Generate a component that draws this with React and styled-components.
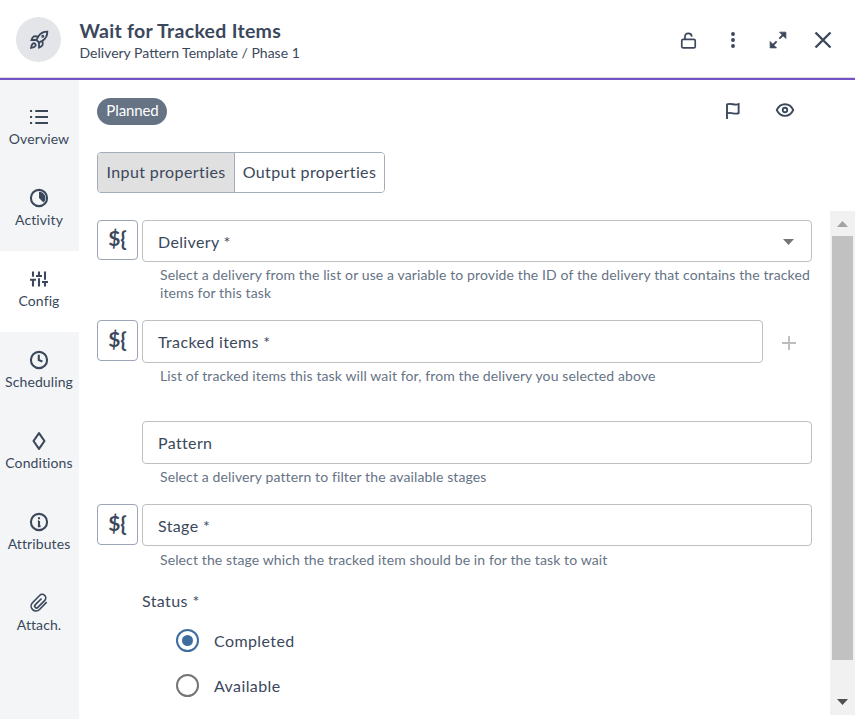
import React from "react";
import styled, { createGlobalStyle } from "styled-components";

const ink = "#3b485c";
const muted = "#667385";

const GlobalStyle = createGlobalStyle`
  * { box-sizing: border-box; }
  body { margin: 0; background: #fff; overflow: hidden; }
`;

const Page = styled.div`
  display: flex;
  flex-direction: column;
  height: 719px;
  font-family: Lato, sans-serif;
  color: ${ink};
`;

const Header = styled.header`
  display: flex;
  height: 80px;
  flex: none;
  padding: 17px 20px 0 16px;
  border-bottom: 2px solid #7553c4;
  box-shadow: inset 0 -1px 0 #d9dce3;
`;

const Avatar = styled.div`
  display: grid;
  place-items: center;
  width: 45px;
  height: 45px;
  border-radius: 50%;
  background: #e3e5e8;
`;

const Heading = styled.div`
  margin: 2px 0 0 18.5px;
  flex: 1;
`;

const Title = styled.h1`
  margin: 0;
  font-size: 19.5px;
  line-height: 24px;
  font-weight: 700;
  letter-spacing: 0.28px;
`;

const Subtitle = styled.div`
  font-size: 14px;
  line-height: 20px;
`;

const HeaderActions = styled.div`
  display: flex;
  gap: 21px;
  margin-top: 11px;
  height: 24px;
`;

const IconButton = styled.button`
  display: grid;
  place-items: center;
  width: 24px;
  height: 24px;
  padding: 0;
  border: 0;
  background: none;
  color: ${(p) => p.$color || ink};
`;

const Body = styled.div`
  display: flex;
  flex: 1;
  min-height: 0;
`;

const Sidebar = styled.nav`
  width: 79px;
  flex: none;
  padding-top: 9px;
  background: #f3f5f7;
`;

const NavItem = styled.a`
  display: flex;
  flex-direction: column;
  align-items: center;
  height: 81px;
  padding: 19px 1px 0 0;
  background: ${(p) => (p.$active ? "#fff" : "transparent")};
`;

const NavLabel = styled.span`
  margin-top: 3px;
  font-size: 14px;
  line-height: 20px;
  letter-spacing: 0.1px;
  white-space: nowrap;
`;

const Main = styled.main`
  display: flex;
  flex-direction: column;
  flex: 1;
  min-width: 0;
  padding-left: 18px;
`;

const StatusBar = styled.div`
  display: flex;
  align-items: flex-start;
  height: 72px;
  padding: 18px 58px 0 0;
`;

const Badge = styled.span`
  width: 70px;
  height: 27px;
  padding-left: 1px;
  margin-right: auto;
  border-radius: 14px;
  background: #667385;
  color: #fff;
  font-size: 15px;
  line-height: 25px;
  letter-spacing: -0.1px;
  text-align: center;
`;

const StatusActions = styled.div`
  display: flex;
  gap: 28.5px;
`;

const Toggle = styled.div`
  display: flex;
  width: 288px;
  height: 41px;
  border: 1px solid #a3acba;
  border-radius: 4px;
  overflow: hidden;
`;

const ToggleOption = styled.button`
  width: ${(p) => p.$width}px;
  padding: 0 0 2px;
  border: 0;
  border-right: ${(p) => (p.$active ? "1px solid #a3acba" : "0")};
  background: ${(p) => (p.$active ? "#e0e0e0" : "#fff")};
  color: ${ink};
  font: 16px/37px Lato, sans-serif;
  letter-spacing: 0.4px;
  white-space: nowrap;
`;

const ScrollArea = styled.div`
  display: flex;
  height: 504px;
  margin-top: 18px;
`;

const Form = styled.form`
  flex: 1;
  min-width: 0;
  padding: 9px 18px 0 0;
`;

const FieldRow = styled.div`
  display: grid;
  grid-template-columns: 41px minmax(0, 1fr);
  column-gap: 4px;
  align-items: start;
  height: ${(p) => p.$height}px;
`;

const VariableButton = styled.button`
  width: 41px;
  height: ${(p) => p.$height || 41}px;
  padding: 0 0 5px;
  border: 1px solid #9ba5b5;
  border-radius: 4px;
  background: #fff;
  color: ${ink};
  font: 700 21px/33px Lato, sans-serif;
`;

const Field = styled.div`
  grid-column: 2;
`;

const InputLine = styled.div`
  display: flex;
  align-items: center;
`;

const InputBox = styled.div`
  display: flex;
  align-items: center;
  flex: 1;
  height: ${(p) => p.$height || 43}px;
  padding: ${(p) => (p.$height ? 2 : 1)}px 17px 0 15px;
  border: 1px solid #bfbfbf;
  border-radius: 4px;
`;

const InputLabel = styled.span`
  flex: 1;
  font-size: 16px;
  line-height: 22px;
  letter-spacing: 0.36px;
`;

const AddButton = styled(IconButton)`
  margin: 3px 11px 0 14px;
`;

const Hint = styled.div`
  margin-top: ${(p) => p.$gap || 4}px;
  padding-left: 18px;
  color: ${muted};
  font-size: 14px;
  line-height: 18px;
  letter-spacing: 0.12px;
  white-space: nowrap;
`;

const RadioGroup = styled.div`
  padding-left: 45px;
`;

const RadioTitle = styled.div`
  height: 29px;
  font-size: 16px;
  line-height: 24px;
  letter-spacing: 0.4px;
`;

const RadioOption = styled.label`
  display: flex;
  align-items: center;
  height: 45px;
  padding-left: 34px;
  font-size: 16px;
  letter-spacing: 0.4px;
`;

const RadioMark = styled.span`
  display: grid;
  place-items: center;
  width: 23px;
  height: 23px;
  margin-right: 15px;
  border: 2px solid ${(p) => (p.$checked ? "#3d6c9e" : "#757575")};
  border-radius: 50%;
  &::after {
    content: "";
    width: 11px;
    height: 11px;
    border-radius: 50%;
    background: ${(p) => (p.$checked ? "#3d6c9e" : "transparent")};
  }
`;

const RadioText = styled.span`
  line-height: 20px;
`;

const Scrollbar = styled.div`
  display: flex;
  flex-direction: column;
  justify-content: space-between;
  align-items: center;
  width: 25px;
  background: #f1f1f1;
`;

const ScrollThumb = styled.div`
  width: 21px;
  height: 424px;
  margin-bottom: 30px;
  background: #c1c1c1;
`;

const ScrollArrow = styled.div`
  display: grid;
  place-items: center;
  width: 25px;
  height: 25px;
  padding-bottom: ${(p) => p.$lift || 0}px;
  color: ${(p) => p.$color};
`;

const icons = {
  rocket: (
    <>
      <path d="M4.5 16.5c-1.5 1.26-2 5-2 5s3.74-.5 5-2c.71-.84.7-2.13-.09-2.91a2.18 2.18 0 0 0-2.91-.09z" />
      <path d="m12 15-3-3a22 22 0 0 1 2-3.95A12.88 12.88 0 0 1 22 2c0 2.72-.78 7.5-6 11a22.35 22.35 0 0 1-4 2z" />
      <path d="M9 12H3s1-3.6 3-4.3c1.62-.6 5 .3 5 .3M12 15v6s3.6-1 4.3-3c.6-1.62-.3-5-.3-5" />
      <circle cx="16.5" cy="7.5" r=".7" />
    </>
  ),
  lock: (
    <>
      <rect x="2.5" y="10.5" width="19" height="12" rx="2" />
      <path d="M7 10V7C7 .2 16.2 .2 16.7 6.5" />
    </>
  ),
  more: (
    <g fill="currentColor" stroke="none">
      <circle cx="12" cy="3" r="2.9" /><circle cx="12" cy="12" r="2.9" /><circle cx="12" cy="21" r="2.9" />
    </g>
  ),
  expand: (
    <>
      <path d="M13.8 10.2L20 4M10.2 13.8L4 20" />
      <path d="M14 1.5H22.5V10L19 6.5L17.5 5ZM1.5 14V22.5H10L6.5 19L5 17.5Z" fill="currentColor" strokeWidth="1" />
    </>
  ),
  close: <path d="M3 3L21 21M21 3L3 21" />,
  flag: <path d="M4 24V4.6C9 2 14 6.5 19.5 4.3V16.2C15 18.5 9.5 14.3 4 16.5" />,
  eye: (
    <>
      <path d="M1 12C3.5 6.7 7.4 4.3 12 4.3S20.5 6.7 23 12C20.5 17.3 16.6 19.7 12 19.7S3.5 17.3 1 12Z" />
      <circle cx="12" cy="12" r="3" />
    </>
  ),
  list: (
    <>
      <path d="M7 4H24M7 12H24M7 20H24" />
      <path d="M0 4H2.8M0 12H2.8M0 20H2.8" />
    </>
  ),
  activity: (
    <>
      <circle cx="12" cy="12" r="10.8" />
      <path d="M12 3.5A8.5 8.5 0 0 1 18 18L12 12Z" fill="currentColor" stroke="none" />
    </>
  ),
  config: <path d="M4 2V9M4 14V22M12 2V8M12 11V22M20 2V13M20 17V22M0 13H8M8 8H16M16 16H24" />,
  clock: (
    <>
      <circle cx="12" cy="12" r="10.8" />
      <path d="M11.7 5V12L16.5 14" />
    </>
  ),
  diamond: <path d="M12 1.5L19.3 12L12 22.5L4.7 12Z" strokeLinejoin="round" />,
  info: (
    <>
      <circle cx="12" cy="12" r="10.8" />
      <path d="M12 10.5V18M10.5 11H12M10.5 17.5H14M12 5.8V8.4" />
    </>
  ),
  clip: <path d="M22.2 10.8l-9.5 9.9a6.4 6.4 0 0 1-9.4-9l9.5-9.7a4.7 4.7 0 0 1 6.9 6.5l-9.2 9.3a2.4 2.4 0 0 1-3.6-3.3l8.5-8.5" />,
  plus: <path d="M12 1.5V22.5M1.5 12H22.5" />,
};

function Icon({ name, size = 18, stroke = 2.5 }) {
  return (
    <svg width={size} height={size} viewBox="0 0 24 24" fill="none" stroke="currentColor" strokeWidth={stroke} overflow="visible">
      {icons[name]}
    </svg>
  );
}

const navItems = [
  ["Overview", "list"],
  ["Activity", "activity"],
  ["Config", "config"],
  ["Scheduling", "clock"],
  ["Conditions", "diamond"],
  ["Attributes", "info"],
  ["Attach.", "clip"],
];

export default function App() {
  return (
    <Page>
      <GlobalStyle />
      <Header>
        <Avatar><Icon name="rocket" size={20} stroke={2.2} /></Avatar>
        <Heading>
          <Title>Wait for Tracked Items</Title>
          <Subtitle>Delivery Pattern Template / Phase 1</Subtitle>
        </Heading>
        <HeaderActions>
          <IconButton type="button" aria-label="Unlock"><Icon name="lock" size={17} stroke={2.4} /></IconButton>
          <IconButton type="button" aria-label="More"><Icon name="more" size={16} /></IconButton>
          <IconButton type="button" aria-label="Expand"><Icon name="expand" size={18} /></IconButton>
          <IconButton type="button" aria-label="Close"><Icon name="close" size={20} stroke={2.8} /></IconButton>
        </HeaderActions>
      </Header>
      <Body>
        <Sidebar>
          {navItems.map(([label, icon]) => (
            <NavItem key={label} $active={label === "Config"}>
              <Icon name={icon} size={18} stroke={icon === "clip" ? 2.2 : 2.8} />
              <NavLabel>{label}</NavLabel>
            </NavItem>
          ))}
        </Sidebar>
        <Main>
          <StatusBar>
            <Badge>Planned</Badge>
            <StatusActions>
              <IconButton type="button" aria-label="Flag"><Icon name="flag" stroke={2.5} /></IconButton>
              <IconButton type="button" aria-label="Watch"><Icon name="eye" stroke={2.4} /></IconButton>
            </StatusActions>
          </StatusBar>
          <Toggle>
            <ToggleOption type="button" $active $width={137}>Input properties</ToggleOption>
            <ToggleOption type="button" $width={149}>Output properties</ToggleOption>
          </Toggle>
          <ScrollArea>
            <Form>
              <FieldRow $height={100}>
                <VariableButton type="button" $height={40}>{"${"}</VariableButton>
                <Field>
                  <InputBox $height={42}>
                    <InputLabel>Delivery *</InputLabel>
                    <svg width="11" height="6" viewBox="0 0 11 6"><path d="M0 0H11L5.5 6Z" fill="#757575" /></svg>
                  </InputBox>
                  <Hint>
                    Select a delivery from the list or use a variable to provide the ID of the delivery that contains the tracked
                    <br />
                    items for this task
                  </Hint>
                </Field>
              </FieldRow>
              <FieldRow $height={101}>
                <VariableButton type="button">{"${"}</VariableButton>
                <Field>
                  <InputLine>
                    <InputBox><InputLabel>Tracked items *</InputLabel></InputBox>
                    <AddButton type="button" aria-label="Add" $color="#bdbdbd"><Icon name="plus" size={16} stroke={2.8} /></AddButton>
                  </InputLine>
                  <Hint>List of tracked items this task will wait for, from the delivery you selected above</Hint>
                </Field>
              </FieldRow>
              <FieldRow $height={83}>
                <Field>
                  <InputBox><InputLabel>Pattern</InputLabel></InputBox>
                  <Hint>Select a delivery pattern to filter the available stages</Hint>
                </Field>
              </FieldRow>
              <FieldRow $height={85}>
                <VariableButton type="button">{"${"}</VariableButton>
                <Field>
                  <InputBox $height={42}><InputLabel>Stage *</InputLabel></InputBox>
                  <Hint $gap={5}>Select the stage which the tracked item should be in for the task to wait</Hint>
                </Field>
              </FieldRow>
              <RadioGroup>
                <RadioTitle>Status *</RadioTitle>
                <RadioOption><RadioMark $checked /><RadioText>Completed</RadioText></RadioOption>
                <RadioOption><RadioMark /><RadioText>Available</RadioText></RadioOption>
              </RadioGroup>
            </Form>
            <Scrollbar>
              <ScrollArrow $color="#a3a3a3"><svg width="11" height="6" viewBox="0 0 11 6"><path d="M0 6H11L5.5 0Z" fill="currentColor" /></svg></ScrollArrow>
              <ScrollThumb />
              <ScrollArrow $color="#505050" $lift={1}><svg width="11" height="6" viewBox="0 0 11 6"><path d="M0 0H11L5.5 6Z" fill="currentColor" /></svg></ScrollArrow>
            </Scrollbar>
          </ScrollArea>
        </Main>
      </Body>
    </Page>
  );
}
